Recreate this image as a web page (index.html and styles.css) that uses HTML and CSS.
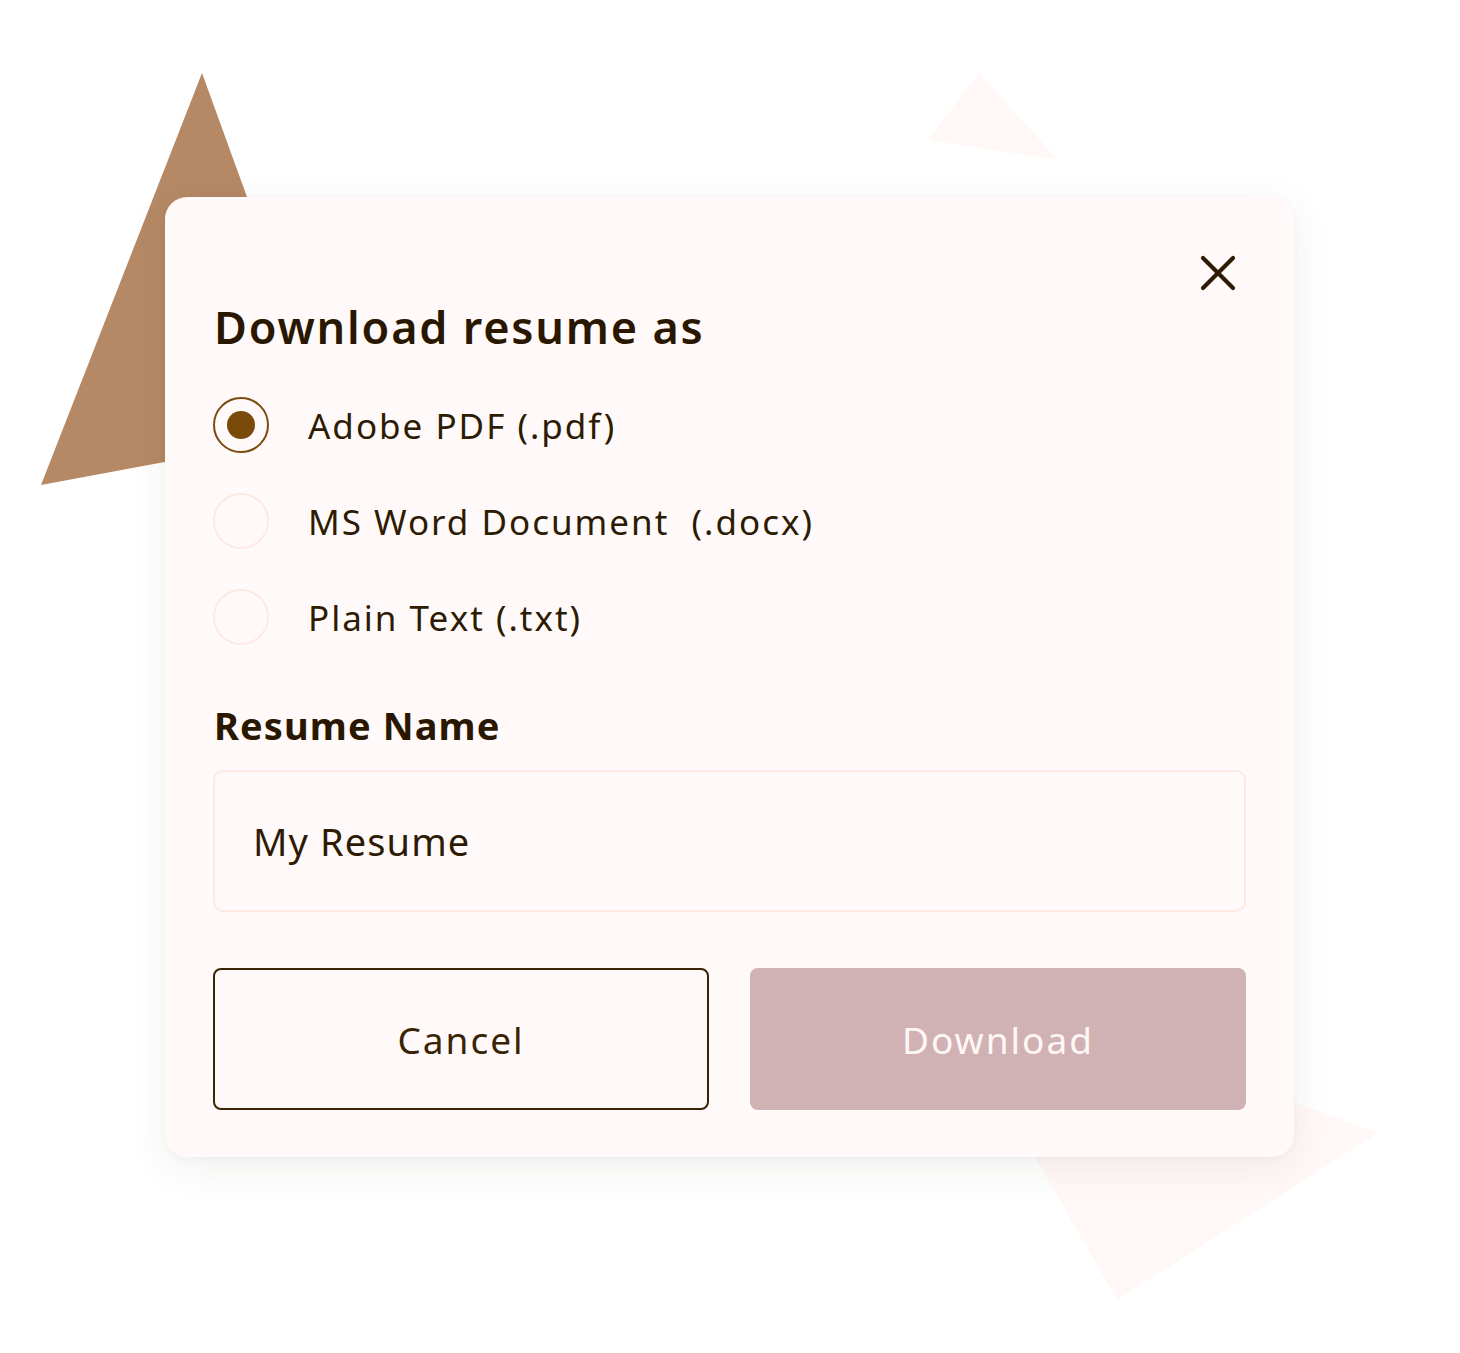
FILE: index.html
```html
<!DOCTYPE html>
<html lang="en">
<head>
<meta charset="utf-8">
<title>Download resume</title>
<link rel="stylesheet" href="styles.css">
</head>
<body>
<svg class="decor" width="1460" height="1353" viewBox="0 0 1460 1353" aria-hidden="true">
  <polygon points="202,73 41,485 332,431" fill="#b58965"/>
  <polygon points="979,73 928,140 1058,160" fill="#fff8f6"/>
  <polygon points="927,969 1378,1133 1117,1300" fill="#fff8f7"/>
</svg>
<main class="stage">
  <section class="dialog">
    <div class="dialog-head">
      <button class="close" type="button" aria-label="Close">
        <svg width="36" height="36" viewBox="0 0 36 36"><path d="M3 3 L33 33 M33 3 L3 33" stroke="#2e1b04" stroke-width="4.2" stroke-linecap="round"/></svg>
      </button>
    </div>
    <h1 class="title">Download resume as</h1>
    <ul class="options">
      <li class="option"><span class="radio checked"><span class="dot"></span></span><span class="label">Adobe PDF (.pdf)</span></li>
      <li class="option"><span class="radio"></span><span class="label">MS Word Document&nbsp; (.docx)</span></li>
      <li class="option"><span class="radio"></span><span class="label">Plain Text (.txt)</span></li>
    </ul>
    <h2 class="field-label">Resume Name</h2>
    <div class="input">My Resume</div>
    <div class="actions">
      <button class="btn btn-cancel" type="button">Cancel</button>
      <button class="btn btn-download" type="button">Download</button>
    </div>
  </section>
</main>
</body>
</html>
```

FILE: styles.css
```css
html, body {
  margin: 0;
  padding: 0;
  background: #ffffff;
}
body {
  width: 1460px;
  height: 1353px;
  position: relative;
  overflow: hidden;
  font-family: "Noto Sans", "Open Sans", sans-serif;
  color: #2e1b04;
}
.decor {
  position: absolute;
  left: 0;
  top: 0;
  z-index: 0;
}
.stage {
  position: relative;
  z-index: 1;
  padding: 197px 0 0 165px;
}
.dialog {
  width: 1129px;
  height: 960px;
  box-sizing: border-box;
  background: #fffaf9;
  border-radius: 22px;
  box-shadow: 0 10px 40px rgba(60, 40, 30, 0.07), 0 2px 8px rgba(60, 40, 30, 0.03);
  padding: 48px 48px 47px 48px;
  display: flex;
  flex-direction: column;
}
.dialog-head {
  display: flex;
  justify-content: flex-end;
  height: 56px;
}
.close {
  width: 56px;
  height: 56px;
  border: 0;
  background: transparent;
  padding: 0;
  display: flex;
  align-items: center;
  justify-content: center;
}
.title {
  margin: -2px 0 0 1px;
  font-size: 45px;
  line-height: 56px;
  font-weight: 600;
  letter-spacing: 1.8px;
  color: #2a1700;
}
.options {
  list-style: none;
  margin: 42px 0 0 0;
  padding: 0;
  display: flex;
  flex-direction: column;
  gap: 40px;
}
.option {
  display: flex;
  align-items: center;
  height: 56px;
}
.radio {
  width: 56px;
  height: 56px;
  box-sizing: border-box;
  border-radius: 50%;
  border: 2px solid #fde9e1;
  display: flex;
  align-items: center;
  justify-content: center;
  flex: none;
}
.radio.checked {
  border-color: #7a4a0c;
}
.dot {
  width: 28px;
  height: 28px;
  border-radius: 50%;
  background: #7a4a0a;
}
.label {
  margin-left: 39px;
  font-size: 35px;
  letter-spacing: 2px;
  color: #2e1b04;
}
.field-label {
  margin: 54px 0 0 1px;
  font-size: 38px;
  line-height: 52px;
  font-weight: 700;
  letter-spacing: 1.1px;
  color: #2a1700;
}
.input {
  margin-top: 19px;
  height: 142px;
  box-sizing: border-box;
  border: 2px solid #fde9e1;
  border-radius: 10px;
  display: flex;
  align-items: center;
  padding-left: 38px;
  font-size: 38px;
  letter-spacing: 1.1px;
  color: #2e1b04;
}
.actions {
  margin-top: auto;
  display: grid;
  grid-template-columns: 1fr 1fr;
  gap: 41px;
}
.btn {
  min-width: 0;
  height: 142px;
  box-sizing: border-box;
  border-radius: 8px;
  font-family: "Noto Sans", "Open Sans", sans-serif;
  font-size: 37px;
  letter-spacing: 2px;
  padding: 0;
}
.btn-cancel {
  background: transparent;
  border: 2px solid #3a2406;
  color: #3a2406;
}
.btn-download {
  background: #d1b2b4;
  border: 0;
  color: #fff7f5;
}
```
